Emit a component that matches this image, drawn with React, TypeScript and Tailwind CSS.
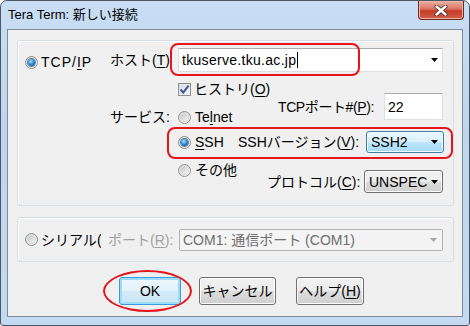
import React from "react";

const Radio = ({ checked = false }: { checked?: boolean }) => (
  <span className="w-[13px] h-[13px] rounded-full border border-[#8e8f8f] bg-[linear-gradient(135deg,#d4d4d4,#ffffff)] flex items-center justify-center shrink-0">
    {checked ? (
      <span className="w-[7px] h-[7px] rounded-full bg-[radial-gradient(circle_at_40%_35%,#a6e0ff,#1e7fd0_55%,#0a3c78)] shadow-[0_0_0_1px_#5d7f9f]" />
    ) : (
      <span className="w-[7px] h-[7px] rounded-full bg-[linear-gradient(135deg,#c4c4c4,#f6f6f6)] shadow-[0_0_0_1px_#d8d8d8]" />
    )}
  </span>
);

const Arrow = ({ color = "#000000" }: { color?: string }) => (
  <svg width="7" height="4" viewBox="0 0 7 4" className="shrink-0">
    <path d="M0 0h7L3.5 4z" fill={color} />
  </svg>
);

const U = ({ children }: { children: React.ReactNode }) => (
  <span className="underline underline-offset-[2px] decoration-1">{children}</span>
);

const App: React.FC = () => {
  return (
    <div className="w-[470px] h-[326px] bg-white font-['Liberation_Sans','Noto_Sans_CJK_JP',sans-serif] text-[14px] leading-[18px] text-black">
      <div className="w-full h-full rounded-t-[7px] rounded-b-[3px] border border-[#4d5866] bg-[linear-gradient(180deg,#c9def4,#bcd5ee_40%,#c3daf1)] flex flex-col">
        {/* title bar */}
        <div className="h-[28px] flex items-start shrink-0">
          <span className="ml-[7px] mt-[6px] text-[13px] leading-[16px] text-black">
            Tera Term: 新しい接続
          </span>
          <div className="ml-auto mr-[5px] w-[46px] h-[19px] rounded-b-[4px] border border-t-0 border-[#6b2a1f] bg-[linear-gradient(180deg,#eab2a4,#d9735f_45%,#c43b25_55%,#d0604b)] shadow-[inset_0_0_0_1px_#f0b4a6] flex items-center justify-center">
            <svg width="14" height="11" viewBox="0 0 14 11">
              <path d="M2.5 1.5L11.5 9.5M11.5 1.5L2.5 9.5" stroke="#4a2a24" strokeWidth="4" strokeLinecap="round" />
              <path d="M2.5 1.5L11.5 9.5M11.5 1.5L2.5 9.5" stroke="#ffffff" strokeWidth="2.4" strokeLinecap="round" />
            </svg>
          </div>
        </div>

        {/* client area */}
        <div className="flex-1 mx-[6px] mb-[8px] border border-[#7d8b9b] bg-[#f0f0f0] flex flex-col">
          {/* TCP/IP group */}
          <div className="mt-[10px] ml-[9px] mr-[8px] h-[166px] border border-[#d5dfe5] rounded-[3px] shadow-[inset_1px_1px_0_#ffffff] flex">
            <div className="w-[92px] pl-[7px] pt-[9px] shrink-0">
              <div className="h-[24px] flex items-center gap-[3px]">
                <Radio checked />
                <span className="tracking-[1px]">
                  TCP/<U>I</U>P
                </span>
              </div>
            </div>

            <div className="flex-1 pt-[7px] flex flex-col">
              {/* host */}
              <div className="relative h-[24px] flex items-center">
                <span className="w-[68px] shrink-0">
                  ホスト(<U>T</U>)
                </span>
                <div className="w-[265px] h-[24px] bg-white border border-[#dbdfe6] border-t-[#abadb3] flex items-center pl-[3px] pr-[4px]">
                  <span className="tracking-[0.3px]">tkuserve.tku.ac.jp</span>
                  <span className="w-px h-[16px] bg-black ml-px" />
                  <span className="ml-auto">
                    <Arrow />
                  </span>
                </div>
                <div className="absolute left-[60px] top-[-5px] w-[190px] h-[33px] border-2 border-[#e8141c] rounded-[8px]" />
              </div>

              {/* history / telnet / port */}
              <div className="mt-[8px] h-[44px] flex">
                <div className="w-[68px] pt-[28px] shrink-0">
                  <div className="h-[18px] flex items-center">サービス:</div>
                </div>
                <div className="w-[100px] shrink-0 flex flex-col">
                  <div className="h-[18px] flex items-center gap-[3px]">
                    <span className="w-[13px] h-[13px] border border-[#8e8f8f] bg-[linear-gradient(135deg,#d8dde3,#f7f9fb)] flex items-center justify-center shrink-0">
                      <svg width="11" height="11" viewBox="0 0 11 11">
                        <path d="M1.5 5.5L4.2 8.6L9.6 1.6" stroke="#3f5a99" strokeWidth="2" fill="none" />
                      </svg>
                    </span>
                    <span>
                      ヒストリ(<U>O</U>)
                    </span>
                  </div>
                  <div className="mt-[10px] h-[18px] flex items-center gap-[4px]">
                    <Radio />
                    <span>
                      Te<U>l</U>net
                    </span>
                  </div>
                </div>
                <div className="pt-[13px] flex items-start">
                  <div className="h-[27px] flex items-center">
                    <span className="w-[106px] shrink-0 tracking-[-0.4px]">
                      TCPポート#(<U>P</U>):
                    </span>
                    <div className="w-[59px] h-[27px] bg-white border border-[#dbdfe6] border-t-[#abadb3] flex items-center pl-[3px]">
                      22
                    </div>
                  </div>
                </div>
              </div>

              {/* SSH */}
              <div className="relative mt-[7px] h-[22px] flex items-center">
                <span className="w-[68px] shrink-0" />
                <div className="w-[60px] shrink-0 flex items-center gap-[4px]">
                  <Radio checked />
                  <span>
                    <U>S</U>SH
                  </span>
                </div>
                <span className="w-[128px] shrink-0">
                  SSHバージョン(<U>V</U>):
                </span>
                <div className="w-[78px] h-[22px] rounded-[3px] border border-[#3c7fb1] bg-[linear-gradient(180deg,#eaf6fd,#d9f0fc_50%,#bee6fd_50%,#a7d9f5)] shadow-[inset_0_0_0_1px_#f4fbff] flex items-center pl-[4px] pr-[5px]">
                  <span>SSH2</span>
                  <span className="ml-auto">
                    <Arrow />
                  </span>
                </div>
                <div className="absolute left-[57px] top-[-4px] w-[286px] h-[32px] border-2 border-[#e8141c] rounded-[8px]" />
              </div>

              {/* other */}
              <div className="mt-[7px] flex">
                <span className="w-[68px] shrink-0" />
                <div className="w-[89px] h-[20px] shrink-0 flex items-center gap-[4px]">
                  <Radio />
                  <span>その他</span>
                </div>
                <div className="mt-[10px] h-[23px] flex items-center">
                  <span className="w-[97px] shrink-0">
                    プロトコル(<U>C</U>):
                  </span>
                  <div className="w-[79px] h-[23px] rounded-[3px] border border-[#707070] bg-[linear-gradient(180deg,#f2f2f2,#ebebeb_50%,#dddddd_50%,#cfcfcf)] shadow-[inset_0_0_0_1px_#fcfcfc] flex items-center pl-[4px] pr-[4px]">
                    <span>UNSPEC</span>
                    <span className="ml-auto">
                      <Arrow />
                    </span>
                  </div>
                </div>
              </div>
            </div>
          </div>

          {/* serial group */}
          <div className="mt-[11px] ml-[9px] mr-[8px] h-[45px] border border-[#d5dfe5] rounded-[3px] shadow-[inset_1px_1px_0_#ffffff] flex items-center pl-[7px]">
            <Radio />
            <span className="ml-[3px] w-[56px] shrink-0">シリアル</span>
            <span className="w-[4px] shrink-0 overflow-hidden leading-[18px]">(</span>
            <span className="ml-[7px] w-[71px] shrink-0 text-[#a0a0a0]">
              ポート(<U>R</U>):
            </span>
            <div className="w-[264px] h-[22px] rounded-[2px] border border-[#adb2b5] bg-[#f4f4f4] flex items-center pl-[3px] pr-[5px] text-[#6d6d6d]">
              <span>COM1: 通信ポート (COM1)</span>
              <span className="ml-auto">
                <Arrow color="#a8a8a8" />
              </span>
            </div>
          </div>

          {/* buttons */}
          <div className="mt-[15px] ml-[111px] flex items-center">
            <div className="relative">
              <div className="w-[62px] h-[28px] rounded-[3px] border border-[#3c9bd8] bg-[linear-gradient(180deg,#eef7fd,#e1f1fb_50%,#d3eaf8_50%,#cde6f6)] shadow-[inset_0_0_0_2px_#9fdcf7] flex items-center justify-center">
                OK
              </div>
              <div className="absolute left-[-16px] top-[-7px] w-[89px] h-[42px] border-2 border-[#e8141c] rounded-[50%]" />
            </div>
            <div className="ml-[18px] w-[77px] h-[28px] rounded-[3px] border border-[#707070] bg-[linear-gradient(180deg,#f2f2f2,#ebebeb_50%,#dddddd_50%,#cfcfcf)] shadow-[inset_0_0_0_1px_#fcfcfc] flex items-center justify-center">
              キャンセル
            </div>
            <div className="ml-[20px] w-[68px] h-[28px] rounded-[3px] border border-[#707070] bg-[linear-gradient(180deg,#f2f2f2,#ebebeb_50%,#dddddd_50%,#cfcfcf)] shadow-[inset_0_0_0_1px_#fcfcfc] flex items-center justify-center">
              ヘルプ(<U>H</U>)
            </div>
          </div>
        </div>
      </div>
    </div>
  );
};

export default App;
